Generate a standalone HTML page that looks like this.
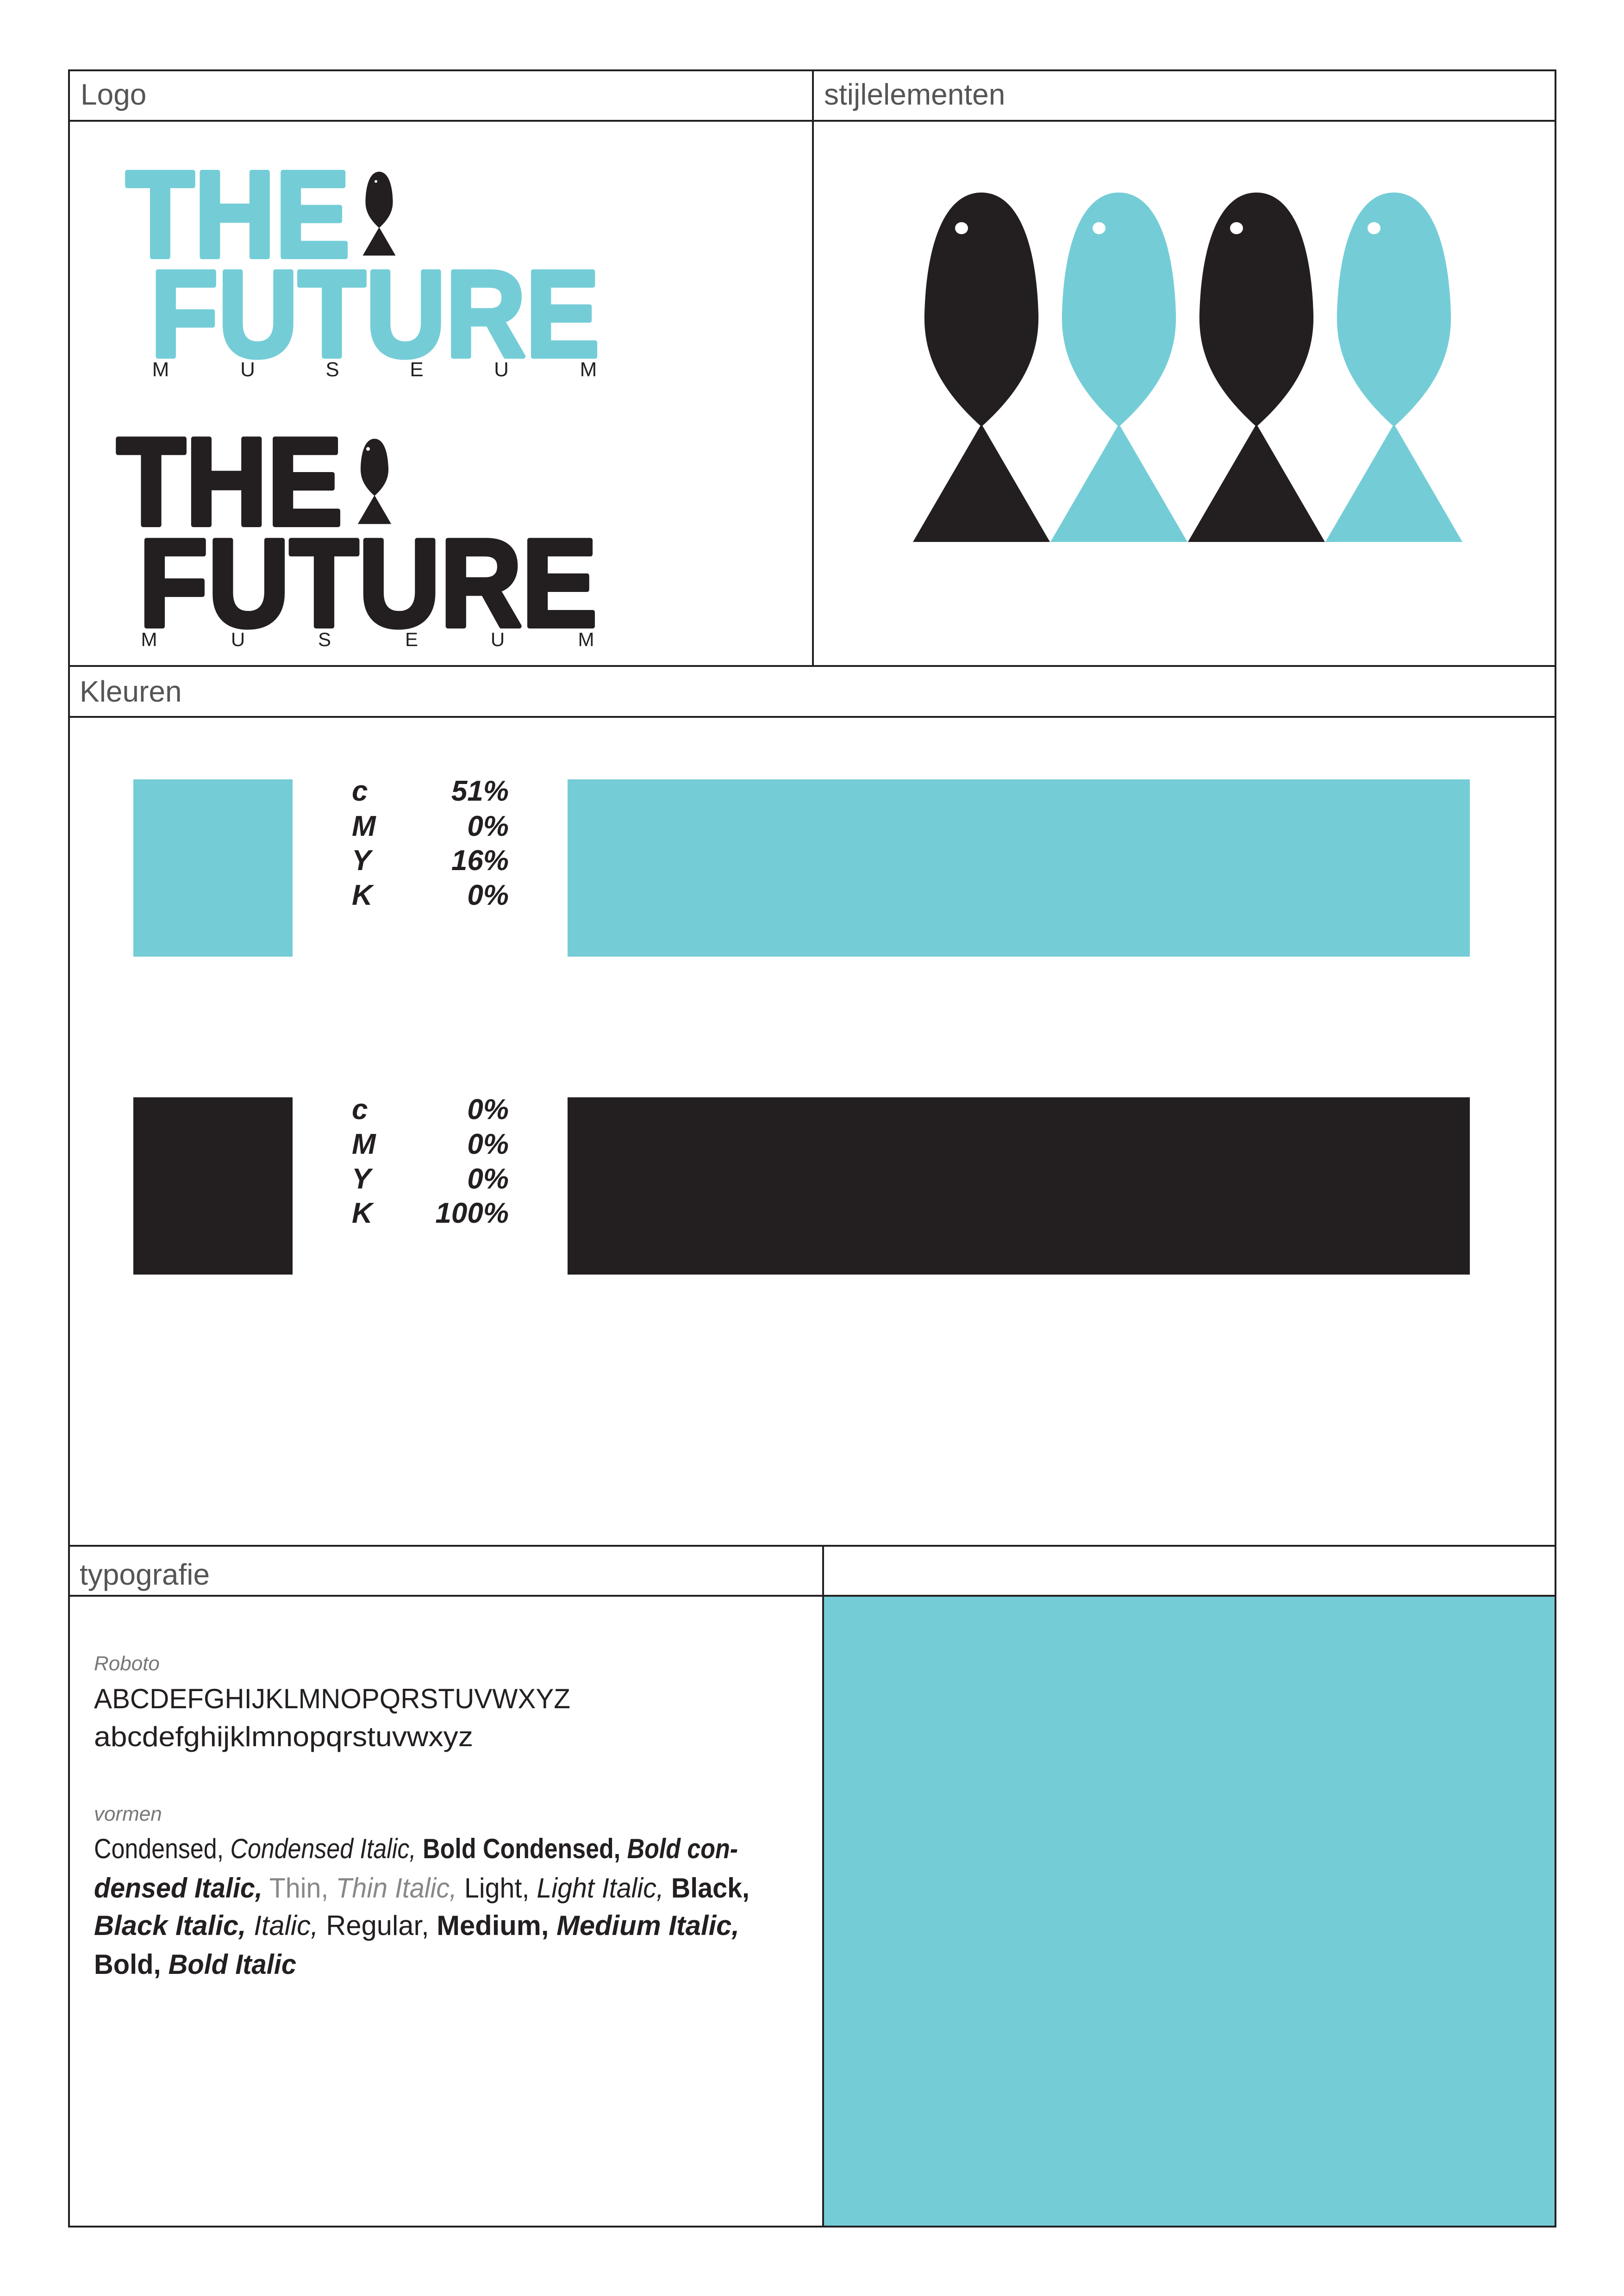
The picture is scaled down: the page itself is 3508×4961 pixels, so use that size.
<!DOCTYPE html>
<html><head><meta charset="utf-8"><style>html,body{margin:0;padding:0;background:#fff}svg{display:block}</style></head>
<body>
<svg width="3508" height="4961" viewBox="0 0 3508 4961" xmlns="http://www.w3.org/2000/svg" font-family="Liberation Sans, sans-serif">
<defs>
<g id="fishB">
<path d="M0,0 C75,0 118,100 123,260 C126,350 90,425 0,506 C-90,425 -126,350 -123,260 C-118,100 -75,0 0,0 Z"/>
<path d="M0,500 L148,755 L-148,755 Z"/>
</g>
</defs>
<rect x="0" y="0" width="3508" height="4961" fill="#fff"/>
<rect x="1778" y="3448" width="1582" height="1363" fill="#74CDD6"/>
<g stroke="#231F20" stroke-width="4" fill="none">
<rect x="149" y="152" width="3211" height="4659"/>
<line x1="149" y1="261" x2="3360" y2="261"/>
<line x1="149" y1="1439" x2="3360" y2="1439"/>
<line x1="149" y1="1549" x2="3360" y2="1549"/>
<line x1="149" y1="3340" x2="3360" y2="3340"/>
<line x1="149" y1="3448" x2="3360" y2="3448"/>
<line x1="1756" y1="152" x2="1756" y2="1439"/>
<line x1="1778" y1="3340" x2="1778" y2="4811"/>
</g>
<g fill="#555" font-size="64" font-weight="300">
<text x="174" y="226">Logo</text>
<text x="1780" y="226">stijlelementen</text>
<text x="172" y="1516">Kleuren</text>
<text x="172" y="3424">typografie</text>
</g>
<g fill="#74CDD6" stroke="#74CDD6" stroke-width="10" stroke-linejoin="round" font-weight="bold" font-size="266">
<text x="272" y="555" textLength="484" lengthAdjust="spacingAndGlyphs">THE</text>
<text x="325" y="770" textLength="970" lengthAdjust="spacingAndGlyphs">FUTURE</text>
</g>
<g fill="#231F20" transform="translate(819,371) scale(0.24)"><use href="#fishB"/></g>
<circle cx="812" cy="392" r="3" fill="#fff"/>
<g fill="#231F20" font-size="44" text-anchor="middle" font-family="Liberation Sans Narrow, Liberation Sans, sans-serif">
<text x="347" y="813">M</text><text x="535" y="813">U</text><text x="718" y="813">S</text><text x="900" y="813">E</text><text x="1083" y="813">U</text><text x="1271" y="813">M</text>
</g>
<g fill="#231F20" stroke="#231F20" stroke-width="10" stroke-linejoin="round" font-weight="bold" font-size="270">
<text x="252" y="1134" textLength="488" lengthAdjust="spacingAndGlyphs">THE</text>
<text x="300" y="1353" textLength="990" lengthAdjust="spacingAndGlyphs">FUTURE</text>
</g>
<g fill="#231F20" transform="translate(809,948) scale(0.244)"><use href="#fishB"/></g>
<circle cx="795" cy="970" r="4" fill="#fff"/>
<g fill="#231F20" font-size="42" text-anchor="middle" font-family="Liberation Sans Narrow, Liberation Sans, sans-serif">
<text x="322" y="1396">M</text><text x="514" y="1396">U</text><text x="701" y="1396">S</text><text x="889" y="1396">E</text><text x="1075" y="1396">U</text><text x="1266" y="1396">M</text>
</g>
<g transform="translate(2120,416)" fill="#231F20"><use href="#fishB"/><ellipse cx="-43" cy="77" rx="14" ry="13" fill="#fff"/></g>
<g transform="translate(2417,416)" fill="#74CDD6"><use href="#fishB"/><ellipse cx="-43" cy="77" rx="14" ry="13" fill="#fff"/></g>
<g transform="translate(2714,416)" fill="#231F20"><use href="#fishB"/><ellipse cx="-43" cy="77" rx="14" ry="13" fill="#fff"/></g>
<g transform="translate(3011,416)" fill="#74CDD6"><use href="#fishB"/><ellipse cx="-43" cy="77" rx="14" ry="13" fill="#fff"/></g>
<rect x="288" y="1684" width="344" height="383" fill="#74CDD6"/>
<rect x="1226" y="1684" width="1949" height="383" fill="#74CDD6"/>
<rect x="288" y="2371" width="344" height="383" fill="#231F20"/>
<rect x="1226" y="2371" width="1949" height="383" fill="#231F20"/>
<g fill="#231F20" font-size="62" font-weight="bold" font-style="italic">
<text x="760" y="1730">c</text><text x="760" y="1806">M</text><text x="760" y="1880">Y</text><text x="760" y="1955">K</text>
<text x="760" y="2418">c</text><text x="760" y="2493">M</text><text x="760" y="2568">Y</text><text x="760" y="2642">K</text>
<g text-anchor="end">
<text x="1099" y="1730">51%</text><text x="1099" y="1806">0%</text><text x="1099" y="1880">16%</text><text x="1099" y="1955">0%</text>
<text x="1099" y="2418">0%</text><text x="1099" y="2493">0%</text><text x="1099" y="2568">0%</text><text x="1099" y="2642">100%</text>
</g>
</g>
<g font-family="Liberation Sans Narrow, Liberation Sans, sans-serif" fill="#231F20">
<text x="203" y="3609" font-size="44" font-style="italic" fill="#777">Roboto</text>
<text x="203" y="3691" font-size="60" textLength="1029" lengthAdjust="spacingAndGlyphs">ABCDEFGHIJKLMNOPQRSTUVWXYZ</text>
<text x="203" y="3773" font-size="60" textLength="819" lengthAdjust="spacingAndGlyphs">abcdefghijklmnopqrstuvwxyz</text>
<text x="203" y="3934" font-size="44" font-style="italic" fill="#777">vormen</text>
<g font-size="60">
<text x="203" y="4015" textLength="1391" lengthAdjust="spacingAndGlyphs">Condensed, <tspan font-style="italic">Condensed Italic,</tspan> <tspan font-weight="bold">Bold Condensed,</tspan> <tspan font-weight="bold" font-style="italic">Bold con-</tspan></text>
<text x="203" y="4100" textLength="1416" lengthAdjust="spacingAndGlyphs"><tspan font-weight="bold" font-style="italic">densed Italic,</tspan> <tspan fill="#888">Thin,</tspan> <tspan fill="#888" font-style="italic">Thin Italic,</tspan> Light, <tspan font-style="italic">Light Italic,</tspan> <tspan font-weight="bold">Black,</tspan></text>
<text x="203" y="4181" textLength="1394" lengthAdjust="spacingAndGlyphs"><tspan font-weight="bold" font-style="italic">Black Italic,</tspan> <tspan font-style="italic">Italic,</tspan> Regular, <tspan font-weight="bold">Medium,</tspan> <tspan font-weight="bold" font-style="italic">Medium Italic,</tspan></text>
<text x="203" y="4265" textLength="437" lengthAdjust="spacingAndGlyphs"><tspan font-weight="bold">Bold,</tspan> <tspan font-weight="bold" font-style="italic">Bold Italic</tspan></text>
</g>
</g>
</svg>
</body></html>
